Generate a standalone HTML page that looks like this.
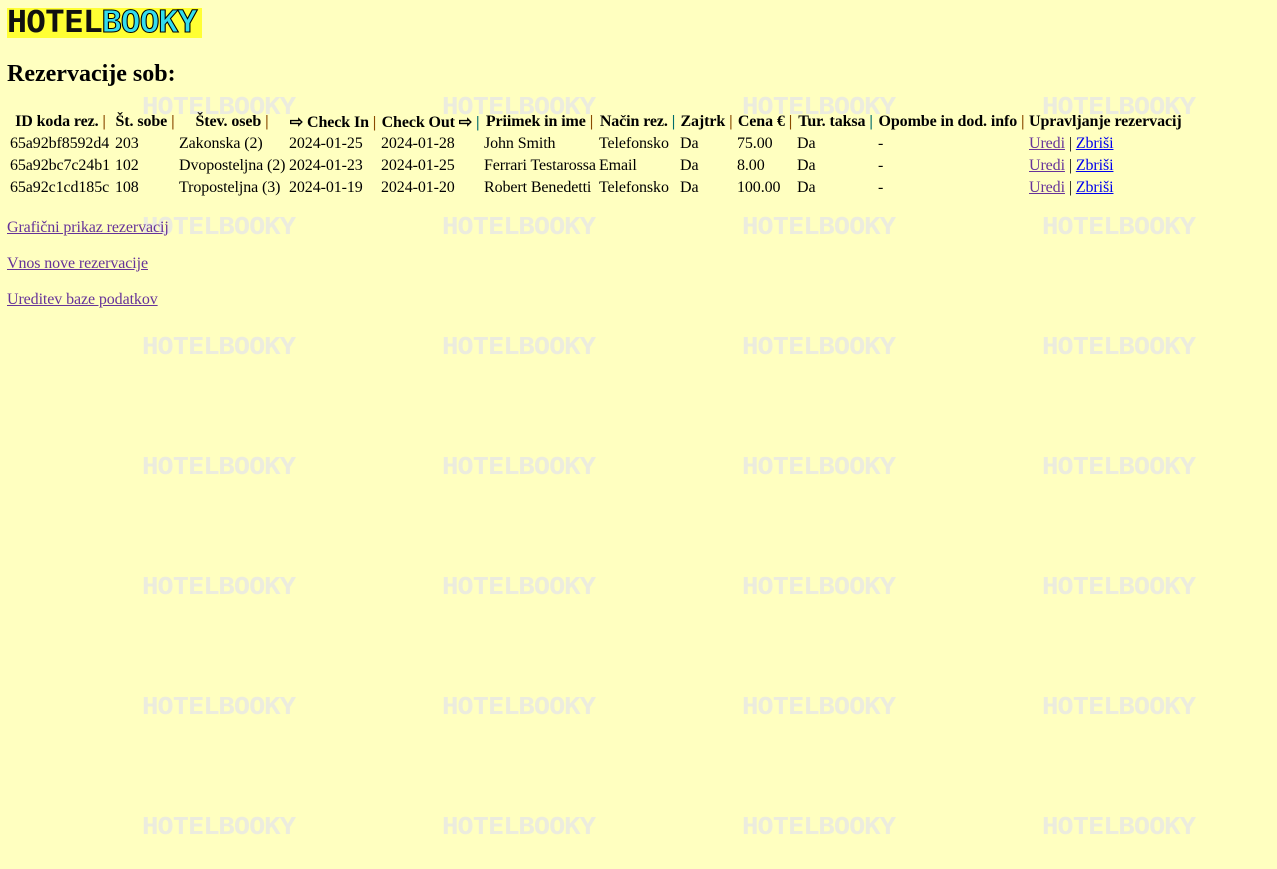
<!DOCTYPE html>
<html><head><meta charset="utf-8"><style>
html,body{margin:0;padding:0;background:#ffffc0;}
body{font-family:"Liberation Serif",serif;font-size:16px;color:#000;width:1277px;height:869px;position:relative;overflow:hidden;}
.wm{position:absolute;width:154px;height:22px;font-family:"DejaVu Sans Mono","Liberation Mono",monospace;font-weight:bold;font-size:23px;line-height:22px;color:#ececde;letter-spacing:-1px;transform:scaleX(1.19);transform-origin:left;white-space:nowrap;z-index:0}
.logo{position:absolute;left:7px;top:8px;width:195px;height:30px;background:#ffff33;overflow:hidden}
.logo span{display:block;font-family:"DejaVu Sans Mono",monospace;font-weight:bold;font-size:30px;line-height:30px;letter-spacing:-1px;white-space:nowrap;transform:scaleX(1.11);transform-origin:left}
.logo b{color:#111}.logo i{font-style:normal;color:#33ddee;-webkit-text-stroke:1px #000}
h2{position:absolute;left:7px;top:61px;margin:0;font-size:24px;font-weight:bold;z-index:1}
table{position:absolute;left:7px;top:110px;border-collapse:separate;border-spacing:2px 2px;z-index:1;table-layout:fixed;width:1194px;letter-spacing:-0.1px}
th,td{padding:0 1px;white-space:nowrap;text-align:left;height:20px;overflow:visible}
th{text-align:center}
.p1{color:#8a4a00}.p2{color:#006b6b}
a{color:#0000ee}a.v{color:#663399}
.lk{position:absolute;left:7px;z-index:1}
</style></head><body>
<div class="logo"><span><b>HOTEL</b><i>BOOKY</i></span></div>
<h2>Rezervacije sob:</h2>
<table>
<colgroup><col style="width:103px"><col style="width:62px"><col style="width:108px"><col style="width:90px"><col style="width:101px"><col style="width:113px"><col style="width:79px"><col style="width:55px"><col style="width:58px"><col style="width:79px"><col style="width:149px"><col style="width:173px"></colgroup>
<tr><th>ID koda rez. <span class="p1">|</span></th><th>Št. sobe <span class="p1">|</span></th><th>Štev. oseb <span class="p1">|</span></th><th>⇨ Check In <span class="p1">|</span></th><th>Check Out ⇨ <span class="p2">|</span></th><th>Priimek in ime <span class="p1">|</span></th><th>Način rez. <span class="p2">|</span></th><th>Zajtrk <span class="p1">|</span></th><th>Cena € <span class="p1">|</span></th><th>Tur. taksa <span class="p2">|</span></th><th>Opombe in dod. info <span class="p1">|</span></th><th style="text-align:left">Upravljanje rezervacij</th></tr>
<tr><td>65a92bf8592d4</td><td>203</td><td>Zakonska (2)</td><td>2024-01-25</td><td>2024-01-28</td><td>John Smith</td><td>Telefonsko</td><td>Da</td><td>75.00</td><td>Da</td><td>-</td><td><a class="v" href="#">Uredi</a> | <a href="#">Zbriši</a></td></tr>
<tr><td>65a92bc7c24b1</td><td>102</td><td>Dvoposteljna (2)</td><td>2024-01-23</td><td>2024-01-25</td><td>Ferrari Testarossa</td><td>Email</td><td>Da</td><td>8.00</td><td>Da</td><td>-</td><td><a class="v" href="#">Uredi</a> | <a href="#">Zbriši</a></td></tr>
<tr><td>65a92c1cd185c</td><td>108</td><td>Troposteljna (3)</td><td>2024-01-19</td><td>2024-01-20</td><td>Robert Benedetti</td><td>Telefonsko</td><td>Da</td><td>100.00</td><td>Da</td><td>-</td><td><a class="v" href="#">Uredi</a> | <a href="#">Zbriši</a></td></tr>
</table>
<a class="lk v" style="top:219px;letter-spacing:-0.1px" href="#">Grafični prikaz rezervacij</a>
<a class="lk v" style="top:255px;letter-spacing:-0.1px" href="#">Vnos nove rezervacije</a>
<a class="lk v" style="top:291px;letter-spacing:-0.1px" href="#">Ureditev baze podatkov</a>
<div id="w"></div>
<script>
var h='';for(var r=0;r<7;r++)for(var c=0;c<4;c++)h+='<div class="wm" style="left:'+(142+c*300)+'px;top:'+(96+r*120)+'px">HOTELBOOKY</div>';
document.getElementById('w').innerHTML=h;
</script>
</body></html>
